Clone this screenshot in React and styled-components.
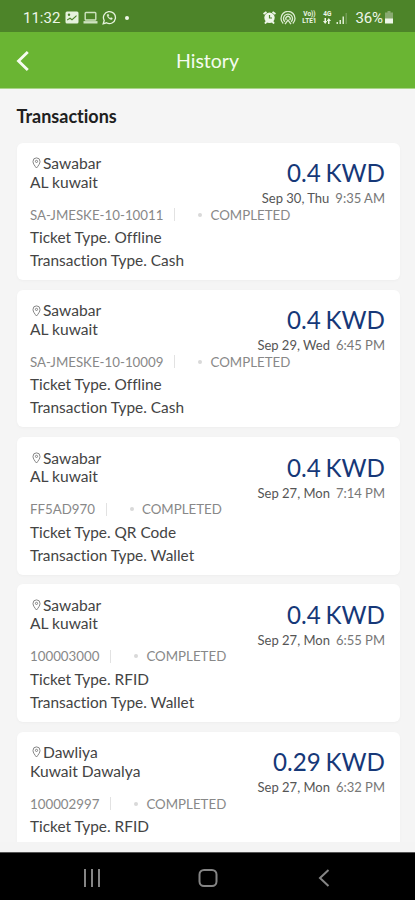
import React from "react";
import styled, { createGlobalStyle } from "styled-components";

const GlobalStyle = createGlobalStyle`
* { box-sizing: border-box; }
body {
  margin: 0;
  font-family: Lato, sans-serif;
  font-variant-ligatures: none;
  background: #f5f5f5;
}
`;

const Screen = styled.div`
  width: 415px;
  height: 900px;
  display: flex;
  flex-direction: column;
  overflow: hidden;
`;

const StatusBar = styled.div`
  height: 32px;
  padding: 3px 21px 0 23px;
  display: flex;
  align-items: center;
  justify-content: space-between;
  background: #4d8429;
  color: #eef6e8;
  font: 15px Roboto, sans-serif;
`;

const StatusGroup = styled.div`
  display: flex;
  align-items: center;
  gap: ${({ gap }) => gap}px;
`;

const Clock = styled.span`
  margin-right: 1px;
`;

const Battery = styled.span`
  letter-spacing: -0.1px;
  margin: 0 -3px 0 3px;
`;

const NetworkLabel = styled.span`
  font-size: 6.5px;
  line-height: 6.5px;
  font-weight: 700;
  width: ${({ width }) => width}px;
  display: flex;
  flex-direction: column;
  align-items: center;
`;

const Dot = styled.span`
  width: 4px;
  height: 4px;
  margin-left: 4px;
  border-radius: 50%;
  background: #eef6e8;
`;

const Header = styled.div`
  height: 57px;
  padding: 1px 16px 0;
  display: grid;
  grid-template-columns: 40px 1fr 40px;
  align-items: center;
  background: #6ab533;
  border-bottom: 1px solid #a9d488;
`;

const Title = styled.h1`
  margin: 0;
  text-align: center;
  font-size: 19.5px;
  font-weight: 400;
  color: #f4fbef;
`;

const Content = styled.div`
  height: 753px;
  padding: 0 15.5px 0 16.5px;
  overflow: hidden;
`;

const Heading = styled.h2`
  margin: 0;
  padding-top: 15px;
  height: 53.5px;
  font-size: 18px;
  line-height: 24px;
  font-weight: 700;
  color: #202020;
`;

const List = styled.div`
  display: flex;
  flex-direction: column;
  gap: 9.8px;
`;

const Card = styled.div`
  height: 137.5px;
  flex-shrink: 0;
  padding: 11.5px 14.5px 0 13.5px;
  border-radius: 6px;
  background: #fff;
  box-shadow: 0 1px 3px rgba(0, 0, 0, 0.03);
`;

const Top = styled.div`
  display: flex;
  justify-content: space-between;
  height: 50px;
`;

const Place = styled.div`
  font-size: 15.6px;
  line-height: 18.5px;
  color: #444;
`;

const Station = styled.div`
  display: flex;
  align-items: center;
  gap: 2px;
  padding-left: 2px;
`;

const Summary = styled.div`
  text-align: right;
  padding-top: 3px;
`;

const Amount = styled.div`
  font-size: 24.2px;
  line-height: 32px;
  word-spacing: -1.5px;
  color: #163878;
`;

const When = styled.div`
  display: flex;
  justify-content: flex-end;
  gap: 6px;
  font-size: 13px;
  line-height: 19px;
  color: #555;
`;

const Time = styled.span`
  color: #777;
`;

const Meta = styled.div`
  display: flex;
  align-items: center;
  height: 21px;
  font-size: 13.3px;
  color: #888;
`;

const Separator = styled.span`
  width: 1px;
  height: 13px;
  margin: 0 23px 0 11px;
  background: #e2e2e2;
`;

const Bullet = styled.span`
  width: 4px;
  height: 4px;
  margin-right: 8px;
  border-radius: 50%;
  background: #d9d9d9;
`;

const Details = styled.div`
  padding-top: 1px;
`;

const Detail = styled.div`
  font-size: 15.4px;
  line-height: 23px;
  color: #444;
`;

const BottomGap = styled.div`
  height: 10px;
  background: #f4f4f4;
`;

const NavBar = styled.div`
  height: 48px;
  padding: 2px 82px 0 83px;
  display: flex;
  align-items: center;
  justify-content: space-between;
  background: #000;
  border-top: 1px solid #555;
`;

const transactions = [
  { station: "Sawabar", area: "AL kuwait", amount: "0.4", date: "Sep 30, Thu", time: "9:35 AM", code: "SA-JMESKE-10-10011", ticket: "Offline", type: "Cash" },
  { station: "Sawabar", area: "AL kuwait", amount: "0.4", date: "Sep 29, Wed", time: "6:45 PM", code: "SA-JMESKE-10-10009", ticket: "Offline", type: "Cash" },
  { station: "Sawabar", area: "AL kuwait", amount: "0.4", date: "Sep 27, Mon", time: "7:14 PM", code: "FF5AD970", ticket: "QR Code", type: "Wallet" },
  { station: "Sawabar", area: "AL kuwait", amount: "0.4", date: "Sep 27, Mon", time: "6:55 PM", code: "100003000", ticket: "RFID", type: "Wallet" },
  { station: "Dawliya", area: "Kuwait Dawalya", amount: "0.29", date: "Sep 27, Mon", time: "6:32 PM", code: "100002997", ticket: "RFID" },
];

const PinIcon = () => (
  <svg width="9" height="12" viewBox="0 0 9 12" fill="none" stroke="#777" strokeWidth="0.9">
    <path d="M4.5 11C2.6 8.7 1 6.6 1 4.4a3.5 3.5 0 0 1 7 0C8 6.6 6.4 8.7 4.5 11z" />
    <circle cx="4.5" cy="4.4" r="1.1" />
  </svg>
);

const PictureIcon = () => (
  <svg width="14" height="13" viewBox="0 0 14 13">
    <rect x="0.5" y="0.5" width="13" height="12" rx="1.5" fill="#e6f2dd" />
    <path d="M2 8.5l3-2 2 1.500 4.500-4v1.500l-4.500 4-2-1.500-3 1.500z" fill="#4d8429" />
    <circle cx="4" cy="3.8" r="1.2" fill="#4d8429" />
  </svg>
);

const LaptopIcon = () => (
  <svg width="15" height="13" viewBox="0 0 15 13" fill="none" stroke="#cfe3c0" strokeWidth="1.4">
    <rect x="2.2" y="1.5" width="10.6" height="7.5" rx="0.8" />
    <path d="M0.5 11.3h14" strokeWidth="2.4" />
  </svg>
);

const WhatsappIcon = () => (
  <svg width="15" height="15" viewBox="0 0 15 15" fill="none" stroke="#e6f2dd" strokeWidth="1.3">
    <path d="M1.2 13.8l1-3.3a6 6 0 1 1 2.3 2.3z" />
    <path d="M5.2 4.5c-.7 2 2.3 5.4 4.8 5l.5-1.3-1.5-.8-.8.8c-.9-.4-1.5-1-1.9-1.9l.7-.8-.7-1.4z" fill="#e6f2dd" strokeWidth="0.3" />
  </svg>
);

const AlarmIcon = () => (
  <svg width="13" height="13" viewBox="0 0 13 13">
    <path d="M0.5 3l3-2M12.5 3l-3-2M2 12.5l2-2.5M11 12.5L9 10" stroke="#eef6e8" strokeWidth="2" />
    <circle cx="6.5" cy="6.7" r="5.2" fill="#eef6e8" />
    <path d="M6.5 4v3H9" fill="none" stroke="#4d8429" strokeWidth="1.2" />
  </svg>
);

const HotspotIcon = () => (
  <svg width="16" height="14" viewBox="0 0 16 14" fill="none" stroke="#dcecd0" strokeWidth="1.3">
    <path d="M3.2 12.5a7 7 0 1 1 9.6 0" />
    <path d="M4.9 10.8a4.5 4.5 0 1 1 6.2 0" />
    <path d="M6.3 9a2.200 2.200 0 1 1 3.400 0" />
    <path d="M5 13.200l3-4.200 3 4.200" />
  </svg>
);

const ArrowsIcon = () => (
  <svg width="8" height="6" viewBox="0 0 8 6" fill="#eef6e8">
    <path d="M1.500 0H3v3h1.200L2.200 6 0 3h1.500zM5 6h1.500V3H8L5.800 0 3.800 3H5z" />
  </svg>
);

const SignalIcon = () => (
  <svg width="12" height="12" viewBox="0 0 12 12">
    <path d="M0.5 12v-2H2v2zM3.500 12V8H5v4zM6.500 12V4.500H8V12z" fill="#dcecd0" />
    <path d="M9.500 12V1H11v11z" fill="#719b55" />
  </svg>
);

const BatteryIcon = () => (
  <svg width="10" height="13" viewBox="0 0 10 13">
    <path d="M3.500 0h3v1.500H9V8H1V1.500h2.500z" fill="#89aa70" />
    <path d="M1 7.500h8v5H1z" fill="#eef6e8" />
  </svg>
);

const BackIcon = () => (
  <svg width="14" height="20" viewBox="0 0 14 20" fill="none" stroke="#f6fcf0" strokeWidth="2.8">
    <path d="M11.800 1L2.500 10l9.300 9" />
  </svg>
);

const RecentsIcon = () => (
  <svg width="18" height="18" viewBox="0 0 18 18" stroke="#858585" strokeWidth="2">
    <path d="M2 0v18M9 0v18M16 0v18" />
  </svg>
);

const HomeIcon = () => (
  <svg width="20" height="18" viewBox="0 0 20 18" fill="none" stroke="#858585" strokeWidth="2">
    <rect x="1.500" y="1" width="17" height="16" rx="4.500" />
  </svg>
);

const NavBackIcon = () => (
  <svg width="18" height="18" viewBox="0 0 18 18" fill="none" stroke="#858585" strokeWidth="2">
    <path d="M13.500 1L5 9l8.500 8" />
  </svg>
);

const Transaction = ({ item }) => (
  <Card>
    <Top>
      <Place>
        <Station>
          <PinIcon />
          {item.station}
        </Station>
        {item.area}
      </Place>
      <Summary>
        <Amount>{item.amount} KWD</Amount>
        <When>
          <span>{item.date}</span>
          <Time>{item.time}</Time>
        </When>
      </Summary>
    </Top>
    <Meta>
      {item.code}
      <Separator />
      <Bullet />
      COMPLETED
    </Meta>
    <Details>
      <Detail>Ticket Type. {item.ticket}</Detail>
      {item.type && <Detail>Transaction Type. {item.type}</Detail>}
    </Details>
  </Card>
);

const App = () => {
  return (
    <>
      <GlobalStyle />
      <Screen>
        <StatusBar>
          <StatusGroup gap={4}>
            <Clock>11:32</Clock>
            <PictureIcon />
            <LaptopIcon />
            <WhatsappIcon />
            <Dot />
          </StatusGroup>
          <StatusGroup gap={4}>
            <AlarmIcon />
            <HotspotIcon />
            <NetworkLabel width={18}>
              <span>Vo))</span>
              <span>LTE1</span>
            </NetworkLabel>
            <NetworkLabel width={10}>
              <span>4G</span>
              <ArrowsIcon />
            </NetworkLabel>
            <SignalIcon />
            <Battery>36%</Battery>
            <BatteryIcon />
          </StatusGroup>
        </StatusBar>
        <Header>
          <BackIcon />
          <Title>History</Title>
        </Header>
        <Content>
          <Heading>Transactions</Heading>
          <List>
            {transactions.map((item) => (
              <Transaction key={item.code} item={item} />
            ))}
          </List>
        </Content>
        <BottomGap />
        <NavBar>
          <RecentsIcon />
          <HomeIcon />
          <NavBackIcon />
        </NavBar>
      </Screen>
    </>
  );
};

export default App;
